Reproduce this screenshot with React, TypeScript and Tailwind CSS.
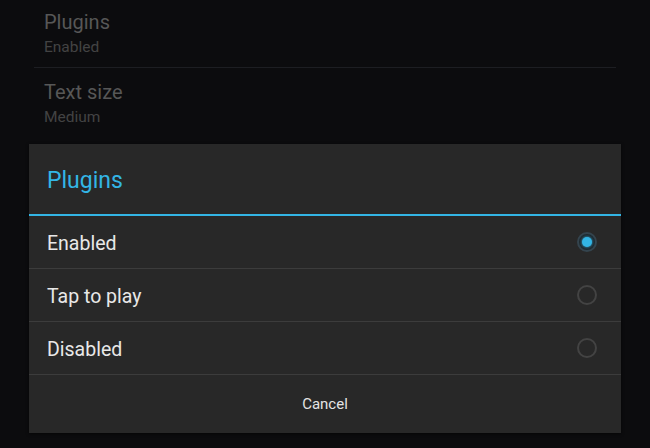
import React from "react";

// Settings list behind the dialog
const settings = [
  { title: "Plugins", value: "Enabled" },
  { title: "Text size", value: "Medium" },
];

const options = ["Enabled", "Tap to play", "Disabled"];

const Radio = ({ checked }: { checked: boolean }) =>
  checked ? (
    <span className="flex h-[20px] w-[20px] items-center justify-center rounded-full border-2 border-[#34444e] bg-[#1f272c]">
      <span className="h-[10px] w-[10px] rounded-full bg-[#33b5e5] shadow-[0_0_3px_#33b5e5]" />
    </span>
  ) : (
    <span className="h-[20px] w-[20px] rounded-full border-2 border-[#434343]" />
  );

const App = () => {
  const selected = 0;

  return (
    <div className="relative h-[448px] w-[650px] overflow-hidden bg-[#0c0c0e] font-['Roboto','Noto_Sans',sans-serif]">
      {/* Settings list */}
      <div className="px-[34px]">
        {settings.map((s, i) => (
          <div key={s.title}>
            {i > 0 && <div className="h-px bg-[#1d1e22]" />}
            <div className={`pb-[10px] pl-[10px] ${i === 0 ? "pt-[10px]" : "pt-[12px]"}`}>
              <div className="text-[20px] leading-[24px] text-[#575757]">{s.title}</div>
              <div className="mt-[3px] text-[15.5px] leading-[20px] text-[#434343]">{s.value}</div>
            </div>
          </div>
        ))}
      </div>

      {/* Dialog */}
      <div className="absolute left-[29px] top-[144px] flex h-[289px] w-[592px] flex-col bg-[#282828] shadow-[0_1px_3px_rgba(0,0,0,0.6)]">
        <div className="h-[70px] pl-[18px] pt-[23px] text-[23px] leading-[28px] text-[#33b5e5]">
          Plugins
        </div>
        <div className="h-[2px] bg-[#33b5e5]" />
        {options.map((opt, i) => (
          <div key={opt}>
            {i > 0 && <div className="h-px bg-[#3c3c3c]" />}
            <div className="flex h-[52px] items-center justify-between pl-[18px] pr-[24px]">
              <span className="pt-[3px] text-[19.5px] leading-[24px] text-[#e8e8e8]">{opt}</span>
              <Radio checked={i === selected} />
            </div>
          </div>
        ))}
        <div className="h-px bg-[#3c3c3c]" />
        <button className="flex h-[58px] items-center justify-center text-[15px] leading-[20px] text-[#e4e4e4]">
          Cancel
        </button>
      </div>
    </div>
  );
};

export default App;
